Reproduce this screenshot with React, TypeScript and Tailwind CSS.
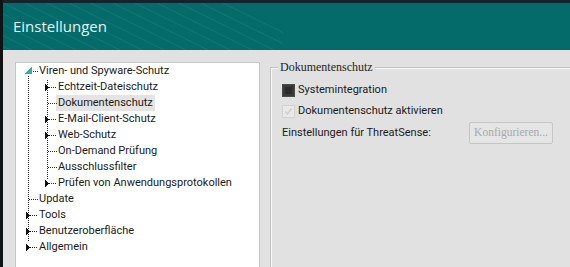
import React from "react";

type Row = { label: string; level: 0 | 1; kind: "expanded" | "collapsed" | "leaf"; selected?: boolean };

const rows: Row[] = [
  { label: "Viren- und Spyware-Schutz", level: 0, kind: "expanded" },
  { label: "Echtzeit-Dateischutz", level: 1, kind: "collapsed" },
  { label: "Dokumentenschutz", level: 1, kind: "leaf", selected: true },
  { label: "E-Mail-Client-Schutz", level: 1, kind: "collapsed" },
  { label: "Web-Schutz", level: 1, kind: "collapsed" },
  { label: "On-Demand Prüfung", level: 1, kind: "leaf" },
  { label: "Ausschlussfilter", level: 1, kind: "leaf" },
  { label: "Prüfen von Anwendungsprotokollen", level: 1, kind: "collapsed" },
  { label: "Update", level: 0, kind: "leaf" },
  { label: "Tools", level: 0, kind: "collapsed" },
  { label: "Benutzeroberfläche", level: 0, kind: "collapsed" },
  { label: "Allgemein", level: 0, kind: "collapsed" },
];

// Tree connector drawing; coordinates local to the tree panel content box (page x-16, y-63)
function TreeLines() {
  const ox = 16;
  const oy = 63;
  const items: React.ReactNode[] = [];
  const dot = "#2a2a2a";
  items.push(
    <line key="v0" x1={28 - ox + 0.5} y1={76 - oy} x2={28 - ox + 0.5} y2={241 - oy} stroke={dot} strokeDasharray="1 1" />
  );
  items.push(
    <line key="v1" x1={47 - ox + 0.5} y1={80 - oy} x2={47 - ox + 0.5} y2={179 - oy} stroke={dot} strokeDasharray="1 1" />
  );
  rows.forEach((r, i) => {
    const cy = 71 + 16 * i - oy + 0.5;
    const ay = 71 + 16 * i - oy;
    if (r.level === 1) {
      const x0 = r.kind === "collapsed" ? 51 : 48;
      items.push(<line key={"h" + i} x1={x0 - ox} y1={cy} x2={57 - ox} y2={cy} stroke={dot} strokeDasharray="1 1" />);
      if (r.kind === "collapsed") {
        items.push(
          <polygon key={"a" + i} points={`${45 - ox},${ay - 3.5} ${49.5 - ox},${ay + 0.5} ${45 - ox},${ay + 4.5}`} fill="#111" />
        );
      }
    } else if (r.kind === "expanded") {
      items.push(<line key={"h" + i} x1={33 - ox} y1={cy} x2={38 - ox} y2={cy} stroke={dot} strokeDasharray="1 1" />);
      items.push(
        <polygon key={"e" + i} points={`${31.5 - ox},${ay - 4} ${31.5 - ox},${ay + 2.5} ${25 - ox},${ay + 2.5}`} fill="#3fa9a9" />
      );
    } else {
      const x0 = r.kind === "collapsed" ? 32 : 29;
      items.push(<line key={"h" + i} x1={x0 - ox} y1={cy} x2={38 - ox} y2={cy} stroke={dot} strokeDasharray="1 1" />);
      if (r.kind === "collapsed") {
        items.push(
          <polygon key={"a" + i} points={`${26 - ox},${ay - 3.5} ${30.5 - ox},${ay + 0.5} ${26 - ox},${ay + 4.5}`} fill="#111" />
        );
      }
    }
  });
  return (
    <svg className="absolute left-0 top-0 pointer-events-none" width="244" height="210" shapeRendering="crispEdges">
      {items}
    </svg>
  );
}

function HeaderStripes() {
  const lines = [];
  for (let i = -4; i < 11; i++) {
    const x = i * 22;
    lines.push(
      <path
        key={i}
        d={`M ${x} 0 Q ${x + 40} 20 ${x + 95} 47`}
        stroke="#ffffff"
        strokeOpacity={0.06}
        strokeWidth={1.2}
        fill="none"
      />
    );
  }
  return (
    <svg className="absolute left-0 top-0 pointer-events-none" width="280" height="47">
      {lines}
    </svg>
  );
}

export default function App() {
  return (
    <div className="w-[570px] h-[267px] overflow-hidden flex bg-[#e1e1e1]">
      <div className="w-[3px] h-full shrink-0 bg-[#111214]" />
      <div className="flex-1 flex flex-col min-h-0">
        <div className="h-[3px] shrink-0 bg-[#15242c]" />
        <div className="h-[47px] shrink-0 relative bg-[#046a6a] flex items-center pl-[10px] overflow-hidden">
          <HeaderStripes />
          <span className="relative text-[15px] text-[#e6f3f3] font-['Open_Sans',sans-serif] leading-none pb-[1px]">
            Einstellungen
          </span>
        </div>
        <div className="flex-1 min-h-0 overflow-hidden flex pl-[12px] pt-[12px] font-['Roboto',sans-serif] text-[11px] text-[#1b1b1b]">
          <div className="w-[245px] h-[230px] shrink-0 bg-white border border-[#c6c6c6] relative">
            <TreeLines />
            <div className="flex flex-col">
              {rows.map((r, i) => (
                <div key={i} className={`h-[16px] flex items-center ${r.level === 1 ? "pl-[40px]" : "pl-[21px]"}`}>
                  <span className={`h-[16px] leading-[16px] px-[2px] whitespace-nowrap ${r.selected ? "bg-[#e4e4e4]" : ""}`}>
                    {r.label}
                  </span>
                </div>
              ))}
            </div>
          </div>
          <div className="flex-1 pl-[10px] pt-[5px]">
            <div className="relative h-[240px] border-t border-l border-[#c2c2c2] shadow-[inset_1px_1px_0_#f7f7f7] pl-[11px] pt-[12px]">
              <span className="absolute -top-[9px] left-[7px] px-[2px] bg-[#e1e1e1] font-['Liberation_Serif',serif] text-[12px] leading-[16px] text-[#1e1e1e]">
                Dokumentenschutz
              </span>
              <div className="h-[21px] flex items-center">
                <span className="w-[13px] h-[13px] border border-[#4a4a4a] bg-[#2c2c2c] shadow-[inset_0_0_0_2px_#3a3a3a] mr-[3px]" />
                <span>Systemintegration</span>
              </div>
              <div className="h-[21px] flex items-center">
                <span className="w-[13px] h-[13px] border border-[#d2d2d2] bg-[#e9e9e9] mr-[3px] flex items-center justify-center">
                  <svg width="9" height="9" viewBox="0 0 9 9">
                    <path d="M1.5 4.5 L3.5 7 L7.5 1.5" stroke="#cfcfcf" strokeWidth="1.4" fill="none" />
                  </svg>
                </span>
                <span>Dokumentenschutz aktivieren</span>
              </div>
              <div className="h-[22px] flex items-center">
                <span className="w-[187px]">Einstellungen für ThreatSense:</span>
                <span className="w-[84px] h-[22px] border border-[#c6c6c6] bg-[#e5e5e5] rounded-[2px] flex items-center justify-center font-['Liberation_Serif',serif] text-[11.5px] text-[#a9a9a9]">
                  Konfigurieren...
                </span>
              </div>
            </div>
          </div>
        </div>
      </div>
    </div>
  );
}
